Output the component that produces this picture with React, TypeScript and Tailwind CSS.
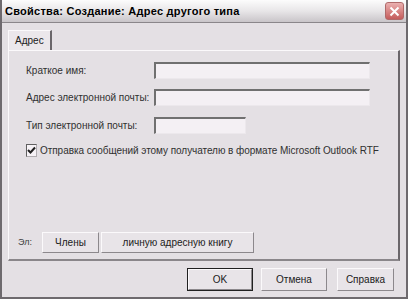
import React from "react";

const font = { fontFamily: '"Liberation Sans", "DejaVu Sans", sans-serif' };

function Btn({ children, className = "" }: { children: React.ReactNode; className?: string }) {
  return (
    <div
      className={
        "flex items-center justify-center whitespace-nowrap bg-[#e8e4e8] border border-t-[#fbf9fb] border-l-[#fbf9fb] border-r-[#8c888c] border-b-[#8c888c] text-[10px] text-[#202020] " +
        className
      }
    >
      {children}
    </div>
  );
}

function Field({ w }: { w: string }) {
  return (
    <div
      className={
        "h-[17px] bg-[#f4f0f4] border-t-2 border-l-2 border-t-[#707070] border-l-[#707070] border-r border-b border-r-[#ece8ec] border-b-[#ece8ec] " +
        w
      }
    />
  );
}

export default function App() {
  return (
    <div
      style={font}
      className="w-[408px] h-[299px] bg-[#e4e0e4] flex flex-col border-l-2 border-r-2 border-b-2 border-[#6e6a6e] overflow-hidden"
    >
      <div className="h-[23px] shrink-0 bg-gradient-to-b from-[#fcfcfc] via-[#e8e6e8] to-[#c9c5c9] border-b border-[#8a868a] flex items-center justify-between pl-[3px] pr-[2px]">
        <span className="text-[11px] font-bold text-black tracking-[0.25px] leading-none mt-[1px] whitespace-nowrap">
          Свойства: Создание: Адрес другого типа
        </span>
        <div className="w-[19px] h-[18px] rounded-[3px] bg-gradient-to-b from-[#eab0b0] to-[#c45c5c] border border-[#b06a6a] flex items-center justify-center">
          <svg width="11" height="11" viewBox="0 0 11 11">
            <path d="M1.5 1.5 L9.5 9.5 M9.5 1.5 L1.5 9.5" stroke="#fff" strokeWidth="2" />
          </svg>
        </div>
      </div>

      <div className="flex-1 flex flex-col pl-[6px] pr-[6px] pt-[7px]">
        <div className="flex">
          <div className="h-[20px] w-[44px] bg-[#ebe7eb] border-t border-l border-[#fbf9fb] border-r-2 border-r-[#6a666a] flex items-center pl-[6px] text-[10px] text-[#202020]">
            Адрес
          </div>
        </div>
        <div className="h-[211px] border-t border-l border-[#fbf9fb] border-r-2 border-b-2 border-r-[#6a666a] border-b-[#8a868a] pl-[17px] pr-[28px] pt-[11px] pb-[6px] flex flex-col text-[10px] text-[#303030] whitespace-nowrap">
          <div className="flex items-center">
            <span className="w-[128px]">Краткое имя:</span>
            <Field w="w-[216px]" />
          </div>
          <div className="flex items-center mt-[10px]">
            <span className="w-[128px]">Адрес электронной почты:</span>
            <Field w="w-[216px]" />
          </div>
          <div className="flex items-center mt-[11px]">
            <span className="w-[128px]">Тип электронной почты:</span>
            <Field w="w-[92px]" />
          </div>
          <div className="flex items-center mt-[9px]">
            <div className="w-[13px] h-[13px] bg-[#f6f2f6] border-t border-l border-[#606060] border-r border-b border-r-[#b0acb0] border-b-[#b0acb0] flex items-center justify-center">
              <svg width="9" height="9" viewBox="0 0 9 9">
                <path d="M1 4 L3.5 6.5 L8 1.5" stroke="#202020" strokeWidth="2" fill="none" />
              </svg>
            </div>
            <span className="ml-[3px] tracking-[-0.05px]">
              Отправка сообщений этому получателю в формате Microsoft Outlook RTF
            </span>
          </div>
          <div className="flex-1" />
          <div className="flex items-center -ml-[8px]">
            <span className="w-[24px] text-[9px] text-[#404040]">Эл:</span>
            <Btn className="w-[57px] h-[21px]">Члены</Btn>
            <Btn className="w-[153px] h-[21px] ml-[2px]">личную адресную книгу</Btn>
          </div>
        </div>
        <div className="flex justify-end mt-[7px] pr-[6px]">
          <div className="w-[66px] h-[23px] border border-[#202020] flex">
            <Btn className="flex-1">OK</Btn>
          </div>
          <Btn className="w-[66px] h-[23px] ml-[8px]">Отмена</Btn>
          <Btn className="w-[57px] h-[23px] ml-[10px]">Справка</Btn>
        </div>
      </div>
    </div>
  );
}
